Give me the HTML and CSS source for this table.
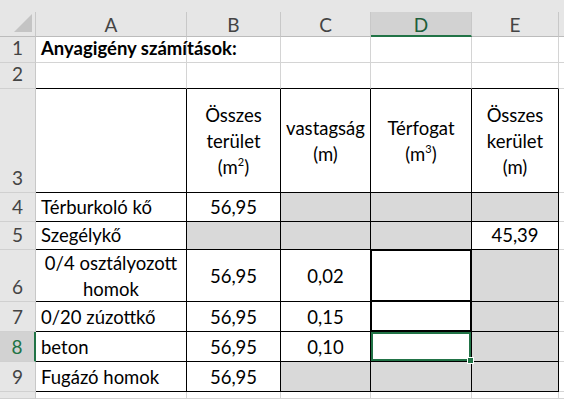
FILE: index.html
```html
<!DOCTYPE html>
<html lang="hu">
<head>
<meta charset="utf-8">
<title>Anyagigény számítások</title>
<link rel="stylesheet" href="styles.css">
</head>
<body>
<div class="sheet">
  <div class="strip"></div>

  <div class="ch corner"><span class="tri"></span></div>
  <div class="ch">A</div>
  <div class="ch">B</div>
  <div class="ch">C</div>
  <div class="ch sel">D</div>
  <div class="ch">E</div>
  <div class="ch last"></div>

  <div class="rh">1</div>
  <div class="c title">Anyagigény számítások:</div>
  <div class="c"></div>
  <div class="c"></div>
  <div class="c"></div>
  <div class="c"></div>
  <div class="c"></div>

  <div class="rh">2</div>
  <div class="c tb"></div>
  <div class="c tb"></div>
  <div class="c tb"></div>
  <div class="c tb"></div>
  <div class="c tb"></div>
  <div class="c"></div>

  <div class="rh">3</div>
  <div class="c t"></div>
  <div class="c t ctr mid"><span>Összes<br>terület<br>(m<sup>2</sup>)</span></div>
  <div class="c t ctr mid"><span>vastagság<br>(m)</span></div>
  <div class="c t ctr mid"><span>Térfogat<br>(m<sup>3</sup>)</span></div>
  <div class="c t ctr mid"><span>Összes<br>kerület<br>(m)</span></div>
  <div class="c"></div>

  <div class="rh">4</div>
  <div class="c t">Térburkoló kő</div>
  <div class="c t ctr">56,95</div>
  <div class="c t g"></div>
  <div class="c t g"></div>
  <div class="c t g"></div>
  <div class="c"></div>

  <div class="rh">5</div>
  <div class="c t">Szegélykő</div>
  <div class="c t g"></div>
  <div class="c t g"></div>
  <div class="c t g"></div>
  <div class="c t ctr">45,39</div>
  <div class="c"></div>

  <div class="rh">6</div>
  <div class="c t ctr mid"><span>0/4 osztályozott<br>homok</span></div>
  <div class="c t ctr mid">56,95</div>
  <div class="c t ctr mid">0,02</div>
  <div class="c t thick-top"></div>
  <div class="c t g"></div>
  <div class="c"></div>

  <div class="rh">7</div>
  <div class="c t">0/20 zúzottkő</div>
  <div class="c t ctr">56,95</div>
  <div class="c t ctr">0,15</div>
  <div class="c t thick"></div>
  <div class="c t g"></div>
  <div class="c"></div>

  <div class="rh rsel">8</div>
  <div class="c t">beton</div>
  <div class="c t ctr">56,95</div>
  <div class="c t ctr">0,10</div>
  <div class="c t active"><span class="handle"></span></div>
  <div class="c t g"></div>
  <div class="c"></div>

  <div class="rh">9</div>
  <div class="c t">Fugázó homok</div>
  <div class="c t ctr">56,95</div>
  <div class="c t g"></div>
  <div class="c t g"></div>
  <div class="c t g"></div>
  <div class="c"></div>

  <div class="rh"></div>
  <div class="c"></div>
  <div class="c"></div>
  <div class="c"></div>
  <div class="c"></div>
  <div class="c"></div>
  <div class="c"></div>
</div>
</body>
</html>
```

FILE: styles.css
```css
html, body {
  margin: 0;
  padding: 0;
  background: #ffffff;
}
body {
  font-family: Lato, "Open Sans", "Noto Sans", sans-serif;
  font-size: 18.5px;
  color: #000;
}
.sheet {
  width: 564px;
  height: 399px;
  overflow: hidden;
  display: grid;
  grid-template-columns: 36px 151px 94px 90px 101px 87px 1fr;
  grid-template-rows: 12px 25px 26px 26px 104px 29px 28px 52px 30px 30px 30px 1fr;
}
.strip {
  grid-column: 1 / -1;
  background: #e6e6e6;
}
.ch {
  box-sizing: border-box;
  background: #e6e6e6;
  border-right: 1px solid #c8c8c8;
  border-bottom: 1px solid #bcbcbc;
  color: #444;
  display: flex;
  align-items: center;
  justify-content: center;
  font-size: 19px;
  line-height: 1;
  padding-top: 1px;
}
.ch.last { border-right: none; }
.ch.corner {
  position: relative;
  border-right: 1px solid #c8c8c8;
}
.tri {
  position: absolute;
  right: 3px;
  bottom: 4px;
  width: 0;
  height: 0;
  border-left: 18px solid transparent;
  border-bottom: 18px solid #c4c4c4;
}
.ch.sel {
  background: #d2d2d2;
  color: #1e5e3a;
  border-bottom: 2px solid #217346;
}
.rh {
  box-sizing: border-box;
  background: #e6e6e6;
  border-right: 1px solid #c8c8c8;
  border-bottom: 1px solid #d0d0d0;
  color: #444;
  font-size: 19px;
  display: flex;
  align-items: flex-end;
  justify-content: center;
  padding-bottom: 2px;
  line-height: 1.2;
}
.rh.rsel {
  background: #d2d2d2;
  color: #217346;
  border-right: 2px solid #217346;
}
.c {
  box-sizing: border-box;
  border-right: 1px solid #d4d4d4;
  border-bottom: 1px solid #d4d4d4;
  display: flex;
  align-items: flex-end;
  padding: 0 4px 3px 5px;
  white-space: nowrap;
  line-height: 1.2;
  position: relative;
}
.c.title {
  font-weight: bold;
  overflow: visible;
  z-index: 1;
}
.c.tb { border-bottom: 1px solid #000; }
.c.t {
  border-right: 1px solid #000;
  border-bottom: 1px solid #000;
}
.c.ctr {
  justify-content: center;
  text-align: center;
  padding-left: 2px;
  padding-right: 2px;
}
.c.mid {
  align-items: center;
  padding-bottom: 0;
  line-height: 26px;
}
.c.g { background: #d9d9d9; }
sup {
  font-size: 11px;
  line-height: 0;
  vertical-align: 8px;
}
.c.thick-top {
  box-shadow: inset 1px 1px 0 #000, inset -1px -1px 0 #000;
}
.c.thick {
  box-shadow: inset 1px 0 0 #000, inset -1px -1px 0 #000;
}
.c.active {
  box-shadow: inset 0 0 0 2px #217346;
  overflow: visible;
  z-index: 2;
}
.handle {
  position: absolute;
  right: -3px;
  bottom: -3px;
  width: 5px;
  height: 5px;
  background: #217346;
  border: 1px solid #ffffff;
}
```
